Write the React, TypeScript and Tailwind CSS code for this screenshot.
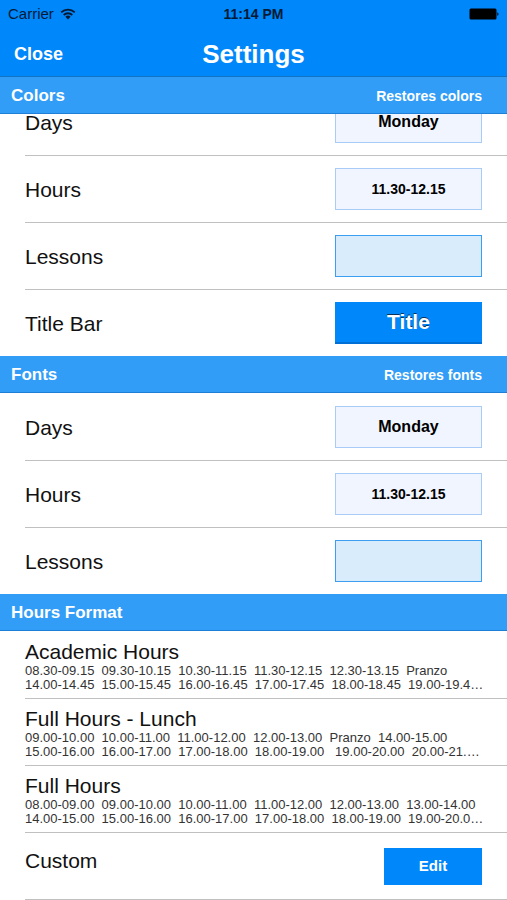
import type { ReactNode } from "react";

interface SectionHeaderProps {
  title: string;
  action?: string;
}

interface RowProps {
  id: string;
  label: string;
  first?: boolean;
  children: ReactNode;
}

interface PreviewProps {
  id: string;
  kind: "days" | "hours" | "lessons" | "title";
}

const hourFormats = [
  {
    name: "Academic Hours",
    lines: [
      "08.30-09.15  09.30-10.15  10.30-11.15  11.30-12.15  12.30-13.15  Pranzo",
      "14.00-14.45  15.00-15.45  16.00-16.45  17.00-17.45  18.00-18.45  19.00-19.4…",
    ],
  },
  {
    name: "Full Hours - Lunch",
    lines: [
      "09.00-10.00  10.00-11.00  11.00-12.00  12.00-13.00  Pranzo  14.00-15.00",
      "15.00-16.00  16.00-17.00  17.00-18.00  18.00-19.00   19.00-20.00  20.00-21.…",
    ],
  },
  {
    name: "Full Hours",
    lines: [
      "08.00-09.00  09.00-10.00  10.00-11.00  11.00-12.00  12.00-13.00  13.00-14.00",
      "14.00-15.00  15.00-16.00  16.00-17.00  17.00-18.00  18.00-19.00  19.00-20.0…",
    ],
  },
];

// Text and colors of each preview button
const previews = {
  days: {
    text: "Monday",
    style: "border border-[#a9cbf8] bg-[#f0f5ff] text-base text-black",
  },
  hours: {
    text: "11.30-12.15",
    style: "border border-[#a9cbf8] bg-[#f0f5ff] text-sm text-black",
  },
  lessons: {
    text: "",
    style: "border border-[#3d9df0] bg-[#d9ecfc]",
  },
  title: {
    text: "Title",
    style:
      "border-b-2 border-[#0070d6] bg-[#0087fa] text-[21px] text-white [text-shadow:0_-1px_0_#0b3157]",
  },
};

function StatusBar() {
  return (
    <div className="grid h-7 grid-cols-3 items-center px-2 text-sm text-[#021a35]">
      <div className="flex items-center gap-1.5 text-[15px]">
        Carrier
        <svg viewBox="0 0 16 12" className="h-3 w-4" aria-hidden="true">
          <g fill="none" stroke="currentColor" strokeWidth="1.8">
            <path d="M1.2 4.4a9.6 9.6 0 0 1 13.6 0" />
            <path d="M3.7 7a6.1 6.1 0 0 1 8.6 0" />
          </g>
          <path d="M5.4 8.7a3.7 3.7 0 0 1 5.2 0L8 11.4z" fill="currentColor" />
        </svg>
      </div>
      <div className="text-center font-bold">11:14 PM</div>
      <div className="flex justify-end">
        <svg viewBox="0 0 30 12" className="h-3 w-[30px]" aria-hidden="true">
          <rect x="0.5" y="0.5" width="27" height="11" rx="1.5" fill="#000" />
          <path d="M28.3 4.2c1.6.4 1.6 3.2 0 3.6z" fill="#000" />
        </svg>
      </div>
    </div>
  );
}

function SectionHeader(props: SectionHeaderProps) {
  return (
    <div className="flex h-[37px] items-center justify-between border-b border-[#1f7fd6] bg-[#319df7] pt-px pr-[25px] pl-[11px] font-bold text-white">
      <h2 className="text-[17px]">{props.title}</h2>
      {props.action && (
        <button type="button" className="text-sm">
          {props.action}
        </button>
      )}
    </div>
  );
}

function Row(props: RowProps) {
  return (
    <div className="pl-[25px]">
      <div
        className={`${
          props.first ? "border-transparent" : "border-[#c0c0c0]"
        } flex h-[67px] items-center justify-between border-t pr-[25px]`}
      >
        <label htmlFor={props.id} className="pt-0.5 text-[21px] leading-6">
          {props.label}
        </label>
        {props.children}
      </div>
    </div>
  );
}

function Preview(props: PreviewProps) {
  const preview = previews[props.kind];
  return (
    <button
      type="button"
      id={props.id}
      className={`${preview.style} h-[42px] w-[147px] font-bold`}
    >
      {preview.text}
    </button>
  );
}

export default function App() {
  return (
    <div className="bg-white font-['Liberation_Sans',Arial,sans-serif] text-[#111]">
      {/* Top bar */}
      <header className="bg-[#0087fa]">
        <StatusBar />
        <div className="grid h-[49px] grid-cols-3 items-center border-b border-[#1272c4] px-3.5 pt-1 font-bold text-white">
          <button type="button" className="justify-self-start text-lg">
            Close
          </button>
          <h1 className="text-center text-[26px]">Settings</h1>
        </div>
      </header>

      {/* Colors */}
      <section>
        <SectionHeader title="Colors" action="Restores colors" />
        {/* The first row is scrolled partly under the header */}
        <div className="flex h-[41px] flex-col justify-end overflow-hidden">
          <Row id="color-days" label="Days" first>
            <Preview id="color-days" kind="days" />
          </Row>
        </div>
        <Row id="color-hours" label="Hours">
          <Preview id="color-hours" kind="hours" />
        </Row>
        <Row id="color-lessons" label="Lessons">
          <Preview id="color-lessons" kind="lessons" />
        </Row>
        <Row id="color-title" label="Title Bar">
          <Preview id="color-title" kind="title" />
        </Row>
      </section>

      {/* Fonts */}
      <section>
        <SectionHeader title="Fonts" action="Restores fonts" />
        <Row id="font-days" label="Days" first>
          <Preview id="font-days" kind="days" />
        </Row>
        <Row id="font-hours" label="Hours">
          <Preview id="font-hours" kind="hours" />
        </Row>
        <Row id="font-lessons" label="Lessons">
          <Preview id="font-lessons" kind="lessons" />
        </Row>
      </section>

      {/* Hours format */}
      <section>
        <SectionHeader title="Hours Format" />
        <ul className="pl-[25px]">
          {hourFormats.map((format) => (
            <li
              key={format.name}
              className="h-[67px] border-t border-[#c0c0c0] pt-2 first:border-transparent"
            >
              <div className="text-[21px] leading-6">{format.name}</div>
              {format.lines.map((line) => (
                <div
                  key={line}
                  className="overflow-hidden text-[13px] leading-[14px] whitespace-pre text-[#333]"
                >
                  {line}
                </div>
              ))}
            </li>
          ))}
          <li className="flex h-[68px] items-center justify-between border-y border-[#c0c0c0] pr-[25px]">
            <label htmlFor="edit-custom" className="pb-2.5 text-[21px] leading-6">
              Custom
            </label>
            <button
              type="button"
              id="edit-custom"
              className="h-[37px] w-[98px] bg-[#0087fa] text-[15px] font-bold text-white"
            >
              Edit
            </button>
          </li>
        </ul>
      </section>
    </div>
  );
}
